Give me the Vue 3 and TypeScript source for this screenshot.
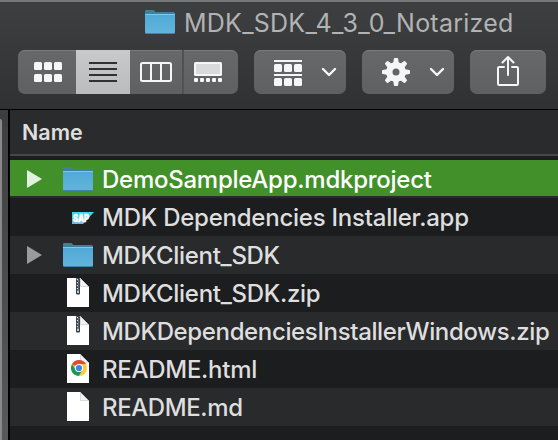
<script setup lang="ts">
type Kind = 'folder' | 'app' | 'zip' | 'html' | 'doc'
interface Entry {
  name: string
  kind: Kind
  tracking: number
  selected?: boolean
}
const entries: Entry[] = [
  { name: 'DemoSampleApp.mdkproject', kind: 'folder', tracking: -0.25, selected: true },
  { name: 'MDK Dependencies Installer.app', kind: 'app', tracking: -0.24 },
  { name: 'MDKClient_SDK', kind: 'folder', tracking: -0.3 },
  { name: 'MDKClient_SDK.zip', kind: 'zip', tracking: -0.29 },
  { name: 'MDKDependenciesInstallerWindows.zip', kind: 'zip', tracking: -0.36 },
  { name: 'README.html', kind: 'html', tracking: -0.27 },
  { name: 'README.md', kind: 'doc', tracking: -0.4 },
]
const teeth = [0, 45, 90, 135, 180, 225, 270, 315]
</script>

<template>
  <div class="window">
    <svg class="defs" width="0" height="0">
      <defs>
        <linearGradient id="folderFace" x1="0" y1="0" x2="0" y2="1">
          <stop offset="0" stop-color="#50a9d6" />
          <stop offset="1" stop-color="#62b5dc" />
        </linearGradient>
        <symbol id="folder" viewBox="0 0 32 26">
          <path d="M1 5V2.2Q1 1 2.2 1H9Q10 1 10.6 2L11.4 3H29.500Q31 3 31 4.500V10H1Z" fill="#417f9f" />
          <path d="M1 5.500H31V23Q31 24.500 29.500 24.500H2.500Q1 24.500 1 23Z" fill="url(#folderFace)" />
          <path d="M1 5.500H31" stroke="#7bcaed" stroke-width="1" />
          <path d="M1.500 24.500H30.500" stroke="#3f86a8" stroke-width="1" />
        </symbol>
      </defs>
    </svg>
    <header class="toolbar">
      <div class="title">
        <svg class="folder" width="32" height="26"><use href="#folder" /></svg>
        <span>MDK_SDK_4_3_0_Notarized</span>
      </div>
      <div class="controls">
        <div class="segments">
          <button class="seg first">
            <svg width="28" height="20" fill="#f5f6f7">
              <template v-for="y in [0, 12]" :key="y">
                <rect v-for="x in [0, 10, 20]" :key="x" :x="x" :y="y" width="8" height="8" rx="1.500" />
              </template>
            </svg>
          </button>
          <button class="seg active">
            <svg width="28" height="20" fill="#303133">
              <rect v-for="y in [0, 6, 12, 18]" :key="y" :y="y" width="28" height="2" />
            </svg>
          </button>
          <button class="seg columns">
            <svg width="32" height="20" fill="none" stroke="#f5f6f7" stroke-width="2">
              <rect x="1" y="1" width="30" height="18" rx="1.500" />
              <path d="M11 1V19M21 1V19" />
            </svg>
          </button>
          <button class="seg last">
            <svg width="28" height="20" fill="#f5f6f7">
              <rect width="28" height="14" rx="1.500" />
              <rect x="2" y="2" width="24" height="10" fill="#d9dadb" />
              <rect v-for="x in [0, 6, 12, 18, 24]" :key="x" :x="x" y="16" width="4" height="4" rx="1" />
            </svg>
          </button>
        </div>
        <button class="drop">
          <svg width="28" height="28" fill="#f5f6f7">
            <template v-for="y in [0, 14]" :key="y">
              <rect :y="y + 2" width="28" height="2" />
              <rect v-for="x in [0, 10, 20]" :key="x" :x="x" :y="y + 6" width="8" height="8" rx="1.500" />
            </template>
          </svg>
          <svg class="chev" width="16" height="10"><path d="M2 2L8 8L14 2" fill="none" stroke="#f5f6f7" stroke-width="2.400" stroke-linecap="round" stroke-linejoin="round" /></svg>
        </button>
        <button class="drop">
          <svg width="28" height="28" viewBox="-14 -14 28 28">
            <path v-for="a in teeth" :key="a" d="M-2.900 -8L-2.100 -13.200Q-2 -14 -1.200 -14H1.200Q2 -14 2.100 -13.200L2.900 -8Z" fill="#f5f6f7" :transform="`rotate(${a})`" />
            <circle r="6.700" fill="none" stroke="#f5f6f7" stroke-width="6.400" />
          </svg>
          <svg class="chev" width="16" height="10"><path d="M2 2L8 8L14 2" fill="none" stroke="#f5f6f7" stroke-width="2.400" stroke-linecap="round" stroke-linejoin="round" /></svg>
        </button>
        <button class="share">
          <svg width="24" height="32" fill="none" stroke="#f5f6f7" stroke-width="2" stroke-linecap="round" stroke-linejoin="round">
            <path d="M8 12H3.200Q2 12 2 13.200V28.800Q2 30 3.200 30H20.800Q22 30 22 28.800V13.200Q22 12 20.800 12H16" />
            <path d="M12 20V2M6.500 7.500L12 2L17.500 7.500" />
          </svg>
        </button>
      </div>
    </header>
    <div class="body">
      <aside class="side"><div class="knob"></div></aside>
      <main class="list">
        <div class="head"><span>Name</span></div>
        <div v-for="e in entries" :key="e.name" class="row" :class="{ selected: e.selected }">
          <div class="arrow"><svg v-if="e.kind === 'folder'" width="16" height="18"><path d="M1 0L16 9L1 18Z" fill="currentColor" /></svg></div>
          <div class="icon">
            <svg v-if="e.kind === 'folder'" class="folder" width="32" height="26"><use href="#folder" /></svg>
            <svg v-else-if="e.kind === 'app'" class="sap" width="22" height="12">
              <defs>
                <linearGradient id="sapFill" x1="0" y1="0" x2="0" y2="1">
                  <stop offset="0" stop-color="#35dcf2" />
                  <stop offset="1" stop-color="#79b4e3" />
                </linearGradient>
              </defs>
              <path d="M0 0H22L11 12H0Z" fill="url(#sapFill)" />
              <text x="1" y="9.700" font-size="10" font-weight="900" textLength="16" lengthAdjust="spacingAndGlyphs" fill="#fff" stroke="#fff" stroke-width=".4">SAP</text>
            </svg>
            <svg v-else class="page" width="24" height="30">
              <path d="M1 0H14L23 9V29H1Z" fill="#fff" />
              <path d="M14 0L23 9H14Z" fill="#f4f4f5" />
              <path d="M14.500 1V8.500H22" fill="none" stroke="#dadadc" stroke-width="1" />
              <g v-if="e.kind === 'zip'">
                <rect x="10" y="0" width="4" height="16.500" rx="1" fill="#353f48" />
                <path d="M11.500 1V12" stroke="#dfe4e6" stroke-width="1.300" stroke-dasharray="1.200 1.800" />
                <path d="M12.700 2.500V12" stroke="#a8b0b5" stroke-width="1" stroke-dasharray="1 2" />
                <rect x="11.300" y="12.500" width="1.400" height="2.500" fill="#fff" />
              </g>
              <g v-if="e.kind === 'html'" transform="translate(13 14)">
                <circle r="8" fill="#f9cc3e" />
                <path d="M0 0L-6.930 -4A8 8 0 0 1 6.930 -4H0Z" fill="#db4c3f" />
                <path d="M-6.930 -4A8 8 0 0 0 -.2 8L3.500 1.800L-3.300 2Z" fill="#159a59" />
                <circle r="4.100" fill="#fff" />
                <circle r="3.100" fill="#3f82ee" />
              </g>
            </svg>
          </div>
          <span class="name" :style="{ letterSpacing: e.tracking + 'px' }">{{ e.name }}</span>
        </div>
      </main>
    </div>
  </div>
</template>

<style>
body { margin: 0; background: #1c1d1f; }
</style>
<style scoped>
* { box-sizing: border-box; }
.window { width: 558px; height: 440px; overflow: hidden; font-family: Inter, "Liberation Sans", sans-serif; background: #1c1d1f; }
svg { display: block; flex: none; }
.defs { position: absolute; }
.toolbar { height: 110px; border-top: 2px solid #77787a; border-bottom: 1px solid #000; background: linear-gradient(#3e3f41, #303132); }
.title { display: flex; height: 42px; padding-left: 144px; align-items: center; color: #b2b3b4; font-size: 25px; letter-spacing: .24px; white-space: nowrap; }
.title .folder { margin-top: -2px; }
.title span { margin-left: 8px; }
.controls { display: flex; gap: 16px; margin-top: 6px; padding-left: 18px; }
button { margin: 0; padding: 0; border: 0; background: transparent; display: flex; align-items: center; }
.segments, .drop, .share { height: 44px; border-radius: 7px; background: linear-gradient(#676869, #5f6062); box-shadow: inset 0 1px #78797a; }
.segments { display: flex; width: 220px; overflow: hidden; }
.seg { height: 44px; width: 54px; justify-content: center; }
.first { width: 58px; padding-left: 2px; }
.active { background: linear-gradient(#c8c9ca, #bbbcbd); }
.columns { border-right: 2px solid #505153; }
.last { padding-left: 4px; padding-right: 10px; }
.drop { width: 92px; padding-left: 20px; }
.chev { margin-left: 19px; }
.share { width: 76px; justify-content: center; padding-bottom: 2px; }
.body { display: flex; height: 330px; }
.side { width: 10px; flex: none; background: linear-gradient(#3d3e40, #58595b); border-right: 2px solid #000; padding-top: 9px; }
.knob { width: 2px; height: 321px; background: #88898b; border-radius: 0 2px 0 0; }
.list { flex: 1; min-width: 0; }
.head { height: 46px; border-bottom: 2px solid #464749; background: #2a2b2d; padding: 9px 0 0 12px; margin-bottom: 4px; color: #dededf; font-size: 21.500px; font-weight: 600; line-height: 27px; }
.row { height: 38px; display: flex; align-items: center; color: #9b9b9c; }
.row:nth-child(odd) { background: #1c1d1f; }
.row:nth-child(even) { background: #292a2c; }
.row.selected { background: #41902a; box-shadow: inset 0 -2px #292a2c; color: #e2f0df; }
.arrow { width: 16px; margin-left: 16px; flex: none; }
.icon { width: 60px; flex: none; display: flex; padding-left: 20px; }
.sap { margin-left: 10px; margin-top: 2px; }
.page { margin-left: 4px; }
.name { padding-top: 2px; color: #dededf; font-size: 24px; font-weight: 450; line-height: 34px; white-space: nowrap; }
.selected .name { color: #fff; font-weight: 500; }
</style>
